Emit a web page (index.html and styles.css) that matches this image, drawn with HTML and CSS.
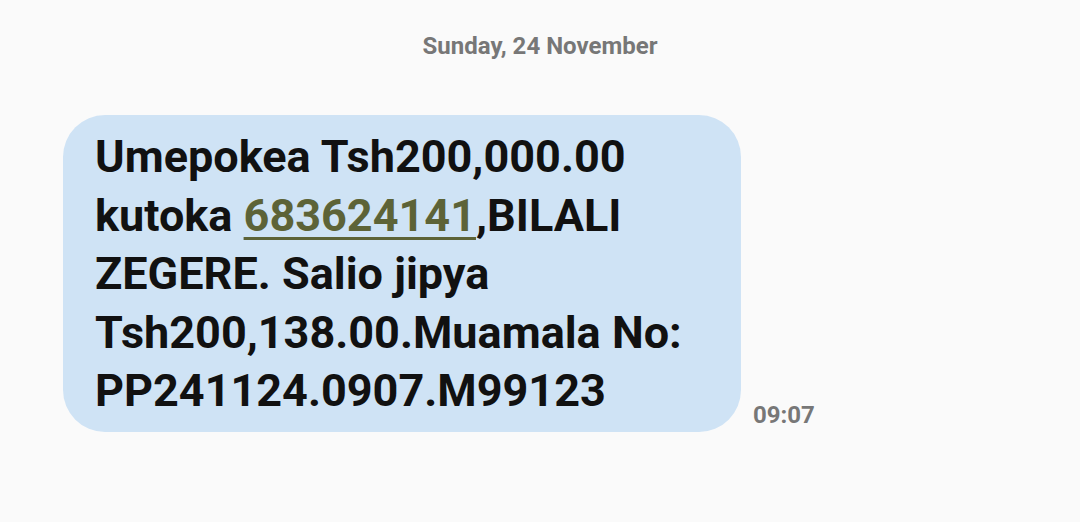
FILE: index.html
```html
<!DOCTYPE html>
<html>
<head>
<meta charset="utf-8">
<link rel="stylesheet" href="styles.css">
</head>
<body>
<div class="chat">
  <div class="date">Sunday, 24 November</div>
  <div class="row">
    <div class="bubble">Umepokea Tsh200,000.00 kutoka <span class="link">683624141</span>,BILALI ZEGERE. Salio jipya Tsh200,138.00.Muamala No: PP241124.0907.M99123</div>
    <div class="time">09:07</div>
  </div>
</div>
</body>
</html>
```
FILE: styles.css
```css
html, body {
  margin: 0;
  padding: 0;
  background: #fafafa;
  width: 1080px;
  height: 522px;
  overflow: hidden;
}
.chat {
  font-family: Roboto, "Noto Sans", sans-serif;
  display: flex;
  flex-direction: column;
}
.date {
  text-align: center;
  color: #777777;
  font-weight: 700;
  font-size: 24px;
  line-height: 28px;
  padding-top: 32px;
}
.row {
  display: flex;
  align-items: flex-end;
  margin-top: 55px;
  padding-left: 63px;
}
.bubble {
  box-sizing: border-box;
  width: 678px;
  height: 317px;
  background: #cfe3f5;
  border-radius: 42px;
  padding: 13px 20px 0 32px;
  color: #111;
  font-weight: 700;
  font-size: 45px;
  line-height: 58.5px;
}
.link {
  color: #5d6337;
  text-decoration: underline;
  text-decoration-thickness: 3px;
  text-underline-offset: 6px;
}
.time {
  color: #777777;
  font-weight: 700;
  font-size: 24px;
  line-height: 28px;
  margin-left: 12px;
  padding-bottom: 3px;
}
```
